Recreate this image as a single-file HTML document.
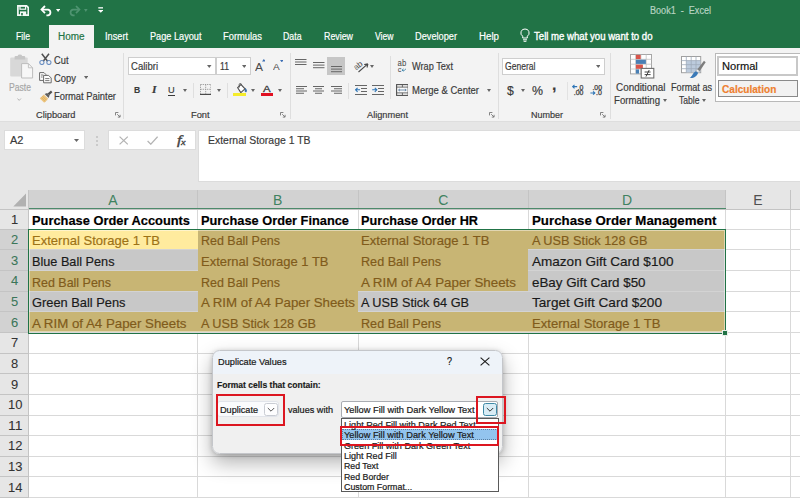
<!DOCTYPE html>
<html><head><meta charset="utf-8"><title>Book1 - Excel</title>
<style>
html,body{margin:0;padding:0;}
body{width:800px;height:498px;overflow:hidden;position:relative;background:#fff;font-family:"Liberation Sans",sans-serif;}
#app{position:absolute;left:0;top:0;width:800px;height:498px;overflow:hidden;}
#app div,#app svg,#app span{position:absolute;box-sizing:border-box;}
#app span{white-space:pre;transform-origin:0 50%;display:block;-webkit-text-stroke:0.18px currentColor;}
</style></head><body><div id="app">
<div style="left:0px;top:0px;width:800px;height:48px;background:#217346;"></div>
<div style="left:0px;top:48px;width:800px;height:73px;background:#f3f3f3;"></div>
<div style="left:0px;top:121px;width:800px;height:69px;background:#e6e6e6;"></div>
<div style="left:0px;top:121px;width:800px;height:1px;background:#dedede;"></div>
<span style="left:650px;top:3.50px;line-height:13px;font-size:10px;color:#b7d3c2;transform:scaleX(0.9069);">Book1  -  Excel</span>
<div style="left:48.5px;top:24.5px;width:45.5px;height:24px;background:#f3f3f3;"></div>
<span style="left:16px;top:30.00px;line-height:13px;font-size:10px;color:#fff;transform:scaleX(0.8682);">File</span>
<span style="left:58px;top:30.00px;line-height:13px;font-size:10px;color:#217346;transform:scaleX(0.9930);">Home</span>
<span style="left:105px;top:30.00px;line-height:13px;font-size:10px;color:#fff;transform:scaleX(0.9194);">Insert</span>
<span style="left:150px;top:30.00px;line-height:13px;font-size:10px;color:#fff;transform:scaleX(0.9168);">Page Layout</span>
<span style="left:222.5px;top:30.00px;line-height:13px;font-size:10px;color:#fff;transform:scaleX(0.9355);">Formulas</span>
<span style="left:283px;top:30.00px;line-height:13px;font-size:10px;color:#fff;transform:scaleX(0.8757);">Data</span>
<span style="left:323.5px;top:30.00px;line-height:13px;font-size:10px;color:#fff;transform:scaleX(0.8842);">Review</span>
<span style="left:375px;top:30.00px;line-height:13px;font-size:10px;color:#fff;transform:scaleX(0.8605);">View</span>
<span style="left:415px;top:30.00px;line-height:13px;font-size:10px;color:#fff;transform:scaleX(0.9212);">Developer</span>
<span style="left:478.5px;top:30.00px;line-height:13px;font-size:10px;color:#fff;transform:scaleX(0.9719);">Help</span>
<span style="left:534px;top:30.00px;line-height:13px;font-size:10px;color:#fff;transform:scaleX(0.9602);-webkit-text-stroke:0.35px #fff;">Tell me what you want to do</span>
<span style="left:54px;top:53.50px;line-height:13px;font-size:10px;color:#3a3a3a;transform:scaleX(0.9317);">Cut</span>
<span style="left:54px;top:71.50px;line-height:13px;font-size:10px;color:#3a3a3a;transform:scaleX(0.9418);">Copy</span>
<span style="left:54px;top:89.50px;line-height:13px;font-size:10px;color:#3a3a3a;transform:scaleX(0.9374);">Format Painter</span>
<span style="left:9px;top:80.50px;line-height:13px;font-size:10px;color:#a6a6a6;transform:scaleX(0.8601);">Paste</span>
<span style="left:36px;top:108.50px;line-height:12px;font-size:9.5px;color:#3a3a3a;transform:scaleX(0.9712);">Clipboard</span>
<span style="left:191px;top:108.50px;line-height:12px;font-size:9.5px;color:#3a3a3a;transform:scaleX(0.9781);">Font</span>
<span style="left:366.5px;top:108.50px;line-height:12px;font-size:9.5px;color:#3a3a3a;transform:scaleX(0.9704);">Alignment</span>
<span style="left:531px;top:108.50px;line-height:12px;font-size:9.5px;color:#3a3a3a;transform:scaleX(0.9468);">Number</span>
<div style="left:128px;top:57px;width:88px;height:18px;background:#fff;border:1px solid #cecece;"></div>
<div style="left:216px;top:57px;width:34.5px;height:18px;background:#fff;border:1px solid #cecece;"></div>
<span style="left:131px;top:59.50px;line-height:13px;font-size:10px;color:#3a3a3a;transform:scaleX(0.9526);">Calibri</span>
<span style="left:219.5px;top:59.50px;line-height:13px;font-size:10px;color:#3a3a3a;transform:scaleX(0.8662);">11</span>
<span style="left:133.5px;top:83.30px;line-height:13px;font-size:9.8px;color:#3a3a3a;font-weight:bold;transform:scaleX(0.8759);">B</span>
<span style="left:152px;top:83.30px;line-height:13px;font-size:10.2px;color:#3a3a3a;font-weight:bold;font-style:italic;font-family:'Liberation Serif',serif;transform:scaleX(1.1339);">I</span>
<span style="left:168.3px;top:83.30px;line-height:13px;font-size:9.8px;color:#3a3a3a;transform:scaleX(0.9466);">U</span>
<div style="left:168.3px;top:94.6px;width:6.7px;height:1px;background:#3a3a3a;"></div>
<span style="left:411.5px;top:59.50px;line-height:13px;font-size:10px;color:#3a3a3a;transform:scaleX(0.9181);">Wrap Text</span>
<span style="left:411.5px;top:83.50px;line-height:13px;font-size:10px;color:#3a3a3a;transform:scaleX(0.9491);">Merge &amp; Center</span>
<div style="left:501.5px;top:57.5px;width:103px;height:17px;background:#fff;border:1px solid #cecece;"></div>
<span style="left:505px;top:59.50px;line-height:13px;font-size:10px;color:#3a3a3a;transform:scaleX(0.8573);">General</span>
<span style="left:507.4px;top:81.60px;line-height:18px;font-size:13.5px;color:#3a3a3a;transform:scaleX(0.9048);">$</span>
<span style="left:532px;top:82.10px;line-height:17px;font-size:13px;color:#3a3a3a;transform:scaleX(0.9514);">%</span>
<span style="left:552px;top:73.80px;line-height:21px;font-size:16px;color:#3a3a3a;font-weight:bold;transform:scaleX(0.9881);">,</span>
<span style="left:616px;top:80.50px;line-height:13px;font-size:10px;color:#3a3a3a;transform:scaleX(0.9891);">Conditional</span>
<span style="left:614px;top:93.50px;line-height:13px;font-size:10px;color:#3a3a3a;transform:scaleX(0.9624);">Formatting</span>
<span style="left:671px;top:80.50px;line-height:13px;font-size:10px;color:#3a3a3a;transform:scaleX(0.9108);">Format as</span>
<span style="left:679px;top:93.50px;line-height:13px;font-size:10px;color:#3a3a3a;transform:scaleX(0.8575);">Table</span>
<div style="left:715px;top:53px;width:90px;height:48.6px;background:#fff;border:1px solid #b9b9b9;"></div>
<div style="left:717.4px;top:56.3px;width:81px;height:20px;background:#fff;border:2px solid #c8c8c8;"></div>
<div style="left:718px;top:80px;width:79.8px;height:16.8px;background:#f2f2f2;border:1px solid #8a8a8a;"></div>
<span style="left:721.7px;top:58.50px;line-height:15px;font-size:11.2px;color:#111;transform:scaleX(0.9927);">Normal</span>
<span style="left:721.7px;top:81.50px;line-height:14px;font-size:10.5px;color:#ee8030;font-weight:bold;transform:scaleX(0.9595);">Calculation</span>
<div style="left:123px;top:53px;width:1px;height:66px;background:#dedede;"></div>
<div style="left:289.5px;top:53px;width:1px;height:66px;background:#dedede;"></div>
<div style="left:497.5px;top:53px;width:1px;height:66px;background:#dedede;"></div>
<div style="left:609.5px;top:53px;width:1px;height:66px;background:#dedede;"></div>
<div style="left:390px;top:56px;width:1px;height:43px;background:#dedede;"></div>
<div style="left:4px;top:130.2px;width:81px;height:20px;background:#fff;border:1px solid #dcdcdc;"></div>
<span style="left:9.5px;top:133.00px;line-height:15px;font-size:11.5px;color:#3a3a3a;transform:scaleX(0.9589);">A2</span>
<div style="left:108.3px;top:130.2px;width:87.8px;height:20px;background:#fff;border:1px solid #dcdcdc;"></div>
<div style="left:198.3px;top:130.2px;width:610px;height:52px;background:#fff;border:1px solid #dcdcdc;"></div>
<span style="left:207.5px;top:133.00px;line-height:15px;font-size:11.5px;color:#3a3a3a;transform:scaleX(0.9076);">External Storage 1 TB</span>
<div style="left:0px;top:190px;width:800px;height:308px;background:#fff;"></div>
<div style="left:0px;top:190px;width:800px;height:19.3px;background:#e6e6e6;"></div>
<div style="left:28.5px;top:190px;width:697.2px;height:19.3px;background:#d2d2d2;"></div>
<div style="left:0px;top:209px;width:28.5px;height:289px;background:#e6e6e6;"></div>
<div style="left:0px;top:229.32999999999998px;width:28.5px;height:103.14999999999999px;background:#d2d2d2;"></div>
<div style="left:28.0px;top:209px;width:1px;height:289px;background:#d9d9d9;"></div>
<div style="left:197.0px;top:209px;width:1px;height:289px;background:#d9d9d9;"></div>
<div style="left:357.7px;top:209px;width:1px;height:289px;background:#d9d9d9;"></div>
<div style="left:527.5px;top:209px;width:1px;height:289px;background:#d9d9d9;"></div>
<div style="left:725.2px;top:209px;width:1px;height:289px;background:#d9d9d9;"></div>
<div style="left:790.1px;top:209px;width:1px;height:289px;background:#d9d9d9;"></div>
<div style="left:859.5px;top:209px;width:1px;height:289px;background:#d9d9d9;"></div>
<div style="left:28.5px;top:228.82999999999998px;width:772px;height:1px;background:#d9d9d9;"></div>
<div style="left:28.5px;top:249.45999999999998px;width:772px;height:1px;background:#d9d9d9;"></div>
<div style="left:28.5px;top:270.09px;width:772px;height:1px;background:#d9d9d9;"></div>
<div style="left:28.5px;top:290.71999999999997px;width:772px;height:1px;background:#d9d9d9;"></div>
<div style="left:28.5px;top:311.34999999999997px;width:772px;height:1px;background:#d9d9d9;"></div>
<div style="left:28.5px;top:331.98px;width:772px;height:1px;background:#d9d9d9;"></div>
<div style="left:28.5px;top:352.61px;width:772px;height:1px;background:#d9d9d9;"></div>
<div style="left:28.5px;top:373.24px;width:772px;height:1px;background:#d9d9d9;"></div>
<div style="left:28.5px;top:393.87px;width:772px;height:1px;background:#d9d9d9;"></div>
<div style="left:28.5px;top:414.5px;width:772px;height:1px;background:#d9d9d9;"></div>
<div style="left:28.5px;top:435.13px;width:772px;height:1px;background:#d9d9d9;"></div>
<div style="left:28.5px;top:455.76px;width:772px;height:1px;background:#d9d9d9;"></div>
<div style="left:28.5px;top:476.39px;width:772px;height:1px;background:#d9d9d9;"></div>
<div style="left:28.5px;top:497.02px;width:772px;height:1px;background:#d9d9d9;"></div>
<div style="left:197.0px;top:190px;width:1px;height:19.3px;background:#c4c4c4;"></div>
<div style="left:357.7px;top:190px;width:1px;height:19.3px;background:#c4c4c4;"></div>
<div style="left:527.5px;top:190px;width:1px;height:19.3px;background:#c4c4c4;"></div>
<div style="left:725.2px;top:190px;width:1px;height:19.3px;background:#c4c4c4;"></div>
<div style="left:790.1px;top:190px;width:1px;height:19.3px;background:#c4c4c4;"></div>
<div style="left:859.5px;top:190px;width:1px;height:19.3px;background:#c4c4c4;"></div>
<div style="left:0px;top:228.82999999999998px;width:28.5px;height:1px;background:#c4c4c4;"></div>
<div style="left:0px;top:249.45999999999998px;width:28.5px;height:1px;background:#c4c4c4;"></div>
<div style="left:0px;top:270.09px;width:28.5px;height:1px;background:#c4c4c4;"></div>
<div style="left:0px;top:290.71999999999997px;width:28.5px;height:1px;background:#c4c4c4;"></div>
<div style="left:0px;top:311.34999999999997px;width:28.5px;height:1px;background:#c4c4c4;"></div>
<div style="left:0px;top:331.98px;width:28.5px;height:1px;background:#c4c4c4;"></div>
<div style="left:0px;top:352.61px;width:28.5px;height:1px;background:#c4c4c4;"></div>
<div style="left:0px;top:373.24px;width:28.5px;height:1px;background:#c4c4c4;"></div>
<div style="left:0px;top:393.87px;width:28.5px;height:1px;background:#c4c4c4;"></div>
<div style="left:0px;top:414.5px;width:28.5px;height:1px;background:#c4c4c4;"></div>
<div style="left:0px;top:435.13px;width:28.5px;height:1px;background:#c4c4c4;"></div>
<div style="left:0px;top:455.76px;width:28.5px;height:1px;background:#c4c4c4;"></div>
<div style="left:0px;top:476.39px;width:28.5px;height:1px;background:#c4c4c4;"></div>
<div style="left:0px;top:497.02px;width:28.5px;height:1px;background:#c4c4c4;"></div>
<div style="left:28px;top:190px;width:1px;height:308px;background:#c4c4c4;"></div>
<div style="left:0px;top:208.5px;width:800px;height:1px;background:#c4c4c4;"></div>
<svg style="left:13px;top:193px;" width="14" height="14" viewBox="0 0 14 14"><path d="M13 0.5 L13 13.5 L0.3 13.5 Z" fill="#b1b1b1"/></svg>
<span style="left:108.2px;top:190.50px;line-height:18px;font-size:14px;color:#3f8260;-webkit-text-stroke:0;">A</span>
<span style="left:273.05px;top:190.50px;line-height:18px;font-size:14px;color:#3f8260;-webkit-text-stroke:0;">B</span>
<span style="left:438.3px;top:190.50px;line-height:18px;font-size:14px;color:#3f8260;-webkit-text-stroke:0;">C</span>
<span style="left:622.0500000000001px;top:190.50px;line-height:18px;font-size:14px;color:#3f8260;-webkit-text-stroke:0;">D</span>
<span style="left:753.3500000000001px;top:190.50px;line-height:18px;font-size:14px;color:#505050;-webkit-text-stroke:0;">E</span>
<span style="left:11.200000000000001px;top:210.51px;line-height:18px;font-size:13.5px;color:#333;transform:scaleX(0.9580);-webkit-text-stroke:0.08px;">1</span>
<span style="left:11.200000000000001px;top:231.14px;line-height:18px;font-size:13.5px;color:#3b7659;transform:scaleX(0.9580);-webkit-text-stroke:0.08px;">2</span>
<span style="left:11.200000000000001px;top:251.77px;line-height:18px;font-size:13.5px;color:#3b7659;transform:scaleX(0.9580);-webkit-text-stroke:0.08px;">3</span>
<span style="left:11.200000000000001px;top:272.40px;line-height:18px;font-size:13.5px;color:#3b7659;transform:scaleX(0.9580);-webkit-text-stroke:0.08px;">4</span>
<span style="left:11.200000000000001px;top:293.03px;line-height:18px;font-size:13.5px;color:#3b7659;transform:scaleX(0.9580);-webkit-text-stroke:0.08px;">5</span>
<span style="left:11.200000000000001px;top:313.66px;line-height:18px;font-size:13.5px;color:#3b7659;transform:scaleX(0.9580);-webkit-text-stroke:0.08px;">6</span>
<span style="left:11.200000000000001px;top:334.30px;line-height:18px;font-size:13.5px;color:#333;transform:scaleX(0.9580);-webkit-text-stroke:0.08px;">7</span>
<span style="left:11.200000000000001px;top:354.93px;line-height:18px;font-size:13.5px;color:#333;transform:scaleX(0.9580);-webkit-text-stroke:0.08px;">8</span>
<span style="left:11.200000000000001px;top:375.56px;line-height:18px;font-size:13.5px;color:#333;transform:scaleX(0.9580);-webkit-text-stroke:0.08px;">9</span>
<span style="left:7.6000000000000005px;top:396.19px;line-height:18px;font-size:13.5px;color:#333;transform:scaleX(0.9580);-webkit-text-stroke:0.08px;">10</span>
<span style="left:7.6000000000000005px;top:416.81px;line-height:18px;font-size:13.5px;color:#333;transform:scaleX(1.0274);-webkit-text-stroke:0.08px;">11</span>
<span style="left:7.6000000000000005px;top:437.44px;line-height:18px;font-size:13.5px;color:#333;transform:scaleX(0.9580);-webkit-text-stroke:0.08px;">12</span>
<span style="left:7.6000000000000005px;top:458.07px;line-height:18px;font-size:13.5px;color:#333;transform:scaleX(0.9580);-webkit-text-stroke:0.08px;">13</span>
<span style="left:7.6000000000000005px;top:478.70px;line-height:18px;font-size:13.5px;color:#333;transform:scaleX(0.9580);-webkit-text-stroke:0.08px;">14</span>
<div style="left:28.5px;top:229.32999999999998px;width:169.0px;height:20.63px;background:#ffeb9e;"></div>
<div style="left:197.5px;top:229.32999999999998px;width:160.7px;height:20.63px;background:#c8b574;"></div>
<div style="left:358.2px;top:229.32999999999998px;width:169.8px;height:20.63px;background:#c8b574;"></div>
<div style="left:528px;top:229.32999999999998px;width:197.70000000000005px;height:20.63px;background:#c8b574;"></div>
<div style="left:28.5px;top:249.95999999999998px;width:169.0px;height:20.63px;background:#c8c8c8;"></div>
<div style="left:197.5px;top:249.95999999999998px;width:160.7px;height:20.63px;background:#c8b574;"></div>
<div style="left:358.2px;top:249.95999999999998px;width:169.8px;height:20.63px;background:#c8b574;"></div>
<div style="left:528px;top:249.95999999999998px;width:197.70000000000005px;height:20.63px;background:#c8c8c8;"></div>
<div style="left:28.5px;top:270.59px;width:169.0px;height:20.63px;background:#c8b574;"></div>
<div style="left:197.5px;top:270.59px;width:160.7px;height:20.63px;background:#c8b574;"></div>
<div style="left:358.2px;top:270.59px;width:169.8px;height:20.63px;background:#c8b574;"></div>
<div style="left:528px;top:270.59px;width:197.70000000000005px;height:20.63px;background:#c8c8c8;"></div>
<div style="left:28.5px;top:291.21999999999997px;width:169.0px;height:20.63px;background:#c8c8c8;"></div>
<div style="left:197.5px;top:291.21999999999997px;width:160.7px;height:20.63px;background:#c8b574;"></div>
<div style="left:358.2px;top:291.21999999999997px;width:169.8px;height:20.63px;background:#c8c8c8;"></div>
<div style="left:528px;top:291.21999999999997px;width:197.70000000000005px;height:20.63px;background:#c8c8c8;"></div>
<div style="left:28.5px;top:311.84999999999997px;width:169.0px;height:20.63px;background:#c8b574;"></div>
<div style="left:197.5px;top:311.84999999999997px;width:160.7px;height:20.63px;background:#c8b574;"></div>
<div style="left:358.2px;top:311.84999999999997px;width:169.8px;height:20.63px;background:#c8b574;"></div>
<div style="left:528px;top:311.84999999999997px;width:197.70000000000005px;height:20.63px;background:#c8b574;"></div>
<div style="left:28.5px;top:249.45999999999998px;width:169.0px;height:1px;background:#d3d3d3;"></div>
<div style="left:28.5px;top:270.09px;width:169.0px;height:1px;background:#d3d3d3;"></div>
<div style="left:528px;top:249.45999999999998px;width:197.70000000000005px;height:1px;background:#d3d3d3;"></div>
<div style="left:528px;top:270.09px;width:197.70000000000005px;height:1px;background:#d3d3d3;"></div>
<div style="left:528px;top:270.09px;width:197.70000000000005px;height:1px;background:#d3d3d3;"></div>
<div style="left:528px;top:290.71999999999997px;width:197.70000000000005px;height:1px;background:#d3d3d3;"></div>
<div style="left:28.5px;top:290.71999999999997px;width:169.0px;height:1px;background:#d3d3d3;"></div>
<div style="left:28.5px;top:311.34999999999997px;width:169.0px;height:1px;background:#d3d3d3;"></div>
<div style="left:358.2px;top:290.71999999999997px;width:169.8px;height:1px;background:#d3d3d3;"></div>
<div style="left:358.2px;top:311.34999999999997px;width:169.8px;height:1px;background:#d3d3d3;"></div>
<div style="left:528px;top:290.71999999999997px;width:197.70000000000005px;height:1px;background:#d3d3d3;"></div>
<div style="left:528px;top:311.34999999999997px;width:197.70000000000005px;height:1px;background:#d3d3d3;"></div>
<span style="left:32px;top:211.51px;line-height:17px;font-size:13.3px;color:#000;font-weight:bold;transform:scaleX(0.9660);">Purchase Order Accounts</span>
<span style="left:201px;top:211.51px;line-height:17px;font-size:13.3px;color:#000;font-weight:bold;transform:scaleX(0.9628);">Purchase Order Finance</span>
<span style="left:361px;top:211.51px;line-height:17px;font-size:13.3px;color:#000;font-weight:bold;transform:scaleX(0.9538);">Purchase Order HR</span>
<span style="left:531.5px;top:211.51px;line-height:17px;font-size:13.3px;color:#000;font-weight:bold;transform:scaleX(0.9986);">Purchase Order Management</span>
<span style="left:32px;top:232.24px;line-height:17px;font-size:13.4px;color:#9d7216;transform:scaleX(0.9733);">External Storage 1 TB</span>
<span style="left:201px;top:232.24px;line-height:17px;font-size:13.4px;color:#805b1b;transform:scaleX(0.9310);">Red Ball Pens</span>
<span style="left:361px;top:232.24px;line-height:17px;font-size:13.4px;color:#805b1b;transform:scaleX(0.9771);">External Storage 1 TB</span>
<span style="left:531.5px;top:232.24px;line-height:17px;font-size:13.4px;color:#805b1b;transform:scaleX(0.9520);">A USB Stick 128 GB</span>
<span style="left:32px;top:252.88px;line-height:17px;font-size:13.4px;color:#1a1a1a;transform:scaleX(0.9473);">Blue Ball Pens</span>
<span style="left:201px;top:252.88px;line-height:17px;font-size:13.4px;color:#805b1b;transform:scaleX(0.9695);">External Storage 1 TB</span>
<span style="left:361px;top:252.88px;line-height:17px;font-size:13.4px;color:#805b1b;transform:scaleX(0.9427);">Red Ball Pens</span>
<span style="left:531.5px;top:252.88px;line-height:17px;font-size:13.4px;color:#1a1a1a;transform:scaleX(1.0112);">Amazon Gift Card $100</span>
<span style="left:32px;top:273.50px;line-height:17px;font-size:13.4px;color:#805b1b;transform:scaleX(0.9310);">Red Ball Pens</span>
<span style="left:201px;top:273.50px;line-height:17px;font-size:13.4px;color:#805b1b;transform:scaleX(0.9310);">Red Ball Pens</span>
<span style="left:361px;top:273.50px;line-height:17px;font-size:13.4px;color:#805b1b;transform:scaleX(0.9963);">A RIM of A4 Paper Sheets</span>
<span style="left:531.5px;top:273.50px;line-height:17px;font-size:13.4px;color:#1a1a1a;transform:scaleX(0.9966);">eBay Gift Card $50</span>
<span style="left:32px;top:294.13px;line-height:17px;font-size:13.4px;color:#1a1a1a;transform:scaleX(0.9588);">Green Ball Pens</span>
<span style="left:201px;top:294.13px;line-height:17px;font-size:13.4px;color:#805b1b;transform:scaleX(0.9899);">A RIM of A4 Paper Sheets</span>
<span style="left:361px;top:294.13px;line-height:17px;font-size:13.4px;color:#1a1a1a;transform:scaleX(0.9484);">A USB Stick 64 GB</span>
<span style="left:531.5px;top:294.13px;line-height:17px;font-size:13.4px;color:#1a1a1a;transform:scaleX(1.0154);">Target Gift Card $200</span>
<span style="left:32px;top:314.76px;line-height:17px;font-size:13.4px;color:#805b1b;transform:scaleX(0.9931);">A RIM of A4 Paper Sheets</span>
<span style="left:201px;top:314.76px;line-height:17px;font-size:13.4px;color:#805b1b;transform:scaleX(0.9478);">A USB Stick 128 GB</span>
<span style="left:361px;top:314.76px;line-height:17px;font-size:13.4px;color:#805b1b;transform:scaleX(0.9427);">Red Ball Pens</span>
<span style="left:531.5px;top:314.76px;line-height:17px;font-size:13.4px;color:#805b1b;transform:scaleX(0.9771);">External Storage 1 TB</span>
<div style="left:28.5px;top:207.8px;width:697.2px;height:1.4px;background:#4d8a6b;"></div>
<div style="left:28.9px;top:229.9px;width:696px;height:102.6px;border:1px solid rgba(255,255,255,0.45);"></div>
<div style="left:27.9px;top:228.8px;width:698px;height:104.8px;border:1.3px solid #217346;"></div>
<div style="left:722.2px;top:330.2px;width:5.4px;height:5.4px;background:#217346;border:0.6px solid #e8efe9;"></div>
<svg style="left:16.8px;top:5.4px;" width="12.2" height="11" viewBox="0 0 12.2 11"><path d="M0.9 0.9 H9.6 L11.3 2.6 V10.1 H0.9 Z" fill="none" stroke="#f4f9f6" stroke-width="1.7"/><rect x="3" y="0.9" width="5.6" height="3.3" fill="none" stroke="#f4f9f6" stroke-width="1.2"/><rect x="3" y="6.4" width="6.2" height="3.9" fill="#f4f9f6"/><rect x="4.2" y="8" width="1.6" height="2.4" fill="#217346"/></svg>
<svg style="left:39.5px;top:5px;" width="14" height="12" viewBox="0 0 14 12"><path d="M2 4.6 H8.2 A3 3 0 0 1 8.2 10.4 H6.4" fill="none" stroke="#fff" stroke-width="1.8"/><path d="M5 1 L1.5 4.6 L5 8.2" fill="none" stroke="#fff" stroke-width="1.8"/></svg>
<svg style="left:56.1px;top:8.8px;" width="4.2" height="3" viewBox="0 0 4.2 3"><path d="M0 0 L4.2 0 L2.1 3 Z" fill="#fff"/></svg>
<svg style="left:67px;top:5px;" width="14" height="12" viewBox="0 0 14 12"><path d="M12 4.6 H5.8 A3 3 0 0 0 5.8 10.4 H7.6" fill="none" stroke="#4f9471" stroke-width="1.7"/><path d="M9 1 L12.5 4.6 L9 8.2" fill="none" stroke="#4f9471" stroke-width="1.7"/></svg>
<svg style="left:84.2px;top:8.7px;" width="3.6" height="3" viewBox="0 0 3.6 3"><path d="M0 0 L3.6 0 L1.8 3 Z" fill="#4f9471"/></svg>
<svg style="left:97.8px;top:7.3px;" width="5.6" height="6" viewBox="0 0 5.6 6"><rect x="0.3" y="0.2" width="5" height="1.3" fill="#fff"/><path d="M0 3 H5.6 L2.8 5.8 Z" fill="#fff"/></svg>
<svg style="left:519.6px;top:28.4px;" width="10" height="14" viewBox="0 0 10 14"><path d="M5 1 A3.9 3.9 0 0 1 7.3 8.2 V10 H2.7 V8.2 A3.9 3.9 0 0 1 5 1 Z" fill="none" stroke="#fff" stroke-width="1"/><path d="M3 11.8 H7 M3.6 13.3 H6.4" stroke="#fff" stroke-width="1"/></svg>
<svg style="left:9px;top:54px;" width="25" height="25" viewBox="0 0 25 25"><rect x="1.2" y="3.4" width="17.5" height="19" rx="1" fill="#d8d8d8"/><path d="M5.6 5.4 V3 Q5.6 2 6.6 2 H8.6 Q9 0.6 10.9 0.6 Q12.8 0.6 13.2 2 H15.2 Q16.2 2 16.2 3 V5.4 Z" fill="#c6c6c6"/><path d="M12.6 9.6 H19.4 L23.6 13.8 V24 H12.6 Z" fill="#f7f7f7" stroke="#bdbdbd" stroke-width="1"/><path d="M19.4 9.6 V13.8 H23.6" fill="none" stroke="#bdbdbd" stroke-width="0.9"/></svg>
<svg style="left:17.3px;top:97.6px;" width="4.4" height="3" viewBox="0 0 4.4 3"><path d="M0.4 0.5 L2.2 2.4 L4 0.5" stroke="#b5b5b5" stroke-width="1" fill="none"/></svg>
<svg style="left:39px;top:52.8px;" width="13" height="12.5" viewBox="0 0 13 12.5"><path d="M2.8 0.8 L8.6 8.3 M10 0.8 L4.2 8.3" stroke="#505050" stroke-width="1.5" fill="none"/><ellipse cx="2.9" cy="9.5" rx="2.1" ry="2" fill="none" stroke="#6b8fc2" stroke-width="1.1"/><ellipse cx="9.9" cy="9.5" rx="2.1" ry="2" fill="none" stroke="#6b8fc2" stroke-width="1.1"/></svg>
<svg style="left:38.5px;top:72px;" width="13" height="12" viewBox="0 0 13 12"><path d="M0.6 0.6 H5 L6.8 2.4 V8.4 H0.6 Z" fill="#fdfdfd" stroke="#6a6a6a" stroke-width="1"/><path d="M2 3 H4.4 M2 5 H3.6" stroke="#6a6a6a" stroke-width="0.9"/><path d="M4.6 3.4 H9.6 L12.2 6 V10.8 H4.6 Z" fill="#fdfdfd" stroke="#6a6a6a" stroke-width="1"/><path d="M6.2 6.6 H10.4 M6.2 8.6 H10.4" stroke="#6a6a6a" stroke-width="0.9"/></svg>
<svg style="left:83.7px;top:76.1px;" width="4.2" height="3" viewBox="0 0 4.2 3"><path d="M0 0 L4.2 0 L2.1 3 Z" fill="#666"/></svg>
<svg style="left:39px;top:89.5px;" width="14" height="13.5" viewBox="0 0 14 13.5"><path d="M8.6 3.4 L12 0.6 L13.4 2.2 L10.2 5.2 Z" fill="#505050"/><path d="M5.6 4 L8.2 3 L10.6 5.6 L9.6 8 Z" fill="#5e5e5e"/><path d="M4.8 4.6 L9.2 8.8 L5.2 12.8 L0.8 8.6 Z" fill="#edc47e"/><path d="M3.4 6.2 L7.6 10.4 M2.2 7.4 L6.4 11.6" stroke="#d9a954" stroke-width="0.7" fill="none"/></svg>
<svg style="left:115px;top:112px;" width="6" height="6" viewBox="0 0 6 6"><path d="M0.5 3.4 V0.5 H3.4" stroke="#777" stroke-width="0.9" fill="none"/><path d="M2.2 2.2 L5 5 M5.1 2.8 V5.1 H2.8" stroke="#777" stroke-width="0.9" fill="none"/></svg>
<svg style="left:207.25px;top:64.5px;" width="4.5" height="3" viewBox="0 0 4.5 3"><path d="M0 0 L4.5 0 L2.25 3 Z" fill="#666"/></svg>
<svg style="left:241.75px;top:64.5px;" width="4.5" height="3" viewBox="0 0 4.5 3"><path d="M0 0 L4.5 0 L2.25 3 Z" fill="#666"/></svg>
<span style="left:255px;top:59.80px;line-height:14px;font-size:10.5px;color:#4a4a4a;transform:scaleX(1.1403);-webkit-text-stroke:0;">A</span>
<svg style="left:261.8px;top:59.3px;" width="3.6" height="2.4" viewBox="0 0 3.6 2.4"><path d="M0 2.4 L1.8 0 L3.6 2.4 Z" fill="#3c6eb4"/></svg>
<span style="left:273.3px;top:62.30px;line-height:11px;font-size:8.5px;color:#4a4a4a;transform:scaleX(1.1813);-webkit-text-stroke:0;">A</span>
<svg style="left:279.8px;top:59.5px;" width="3.6" height="2.4" viewBox="0 0 3.6 2.4"><path d="M0 0 L1.8 2.4 L3.6 0 Z" fill="#3c6eb4"/></svg>
<svg style="left:183.0px;top:89.0px;" width="4" height="3" viewBox="0 0 4 3"><path d="M0 0 L4 0 L2.0 3 Z" fill="#666"/></svg>
<div style="left:193px;top:83px;width:1px;height:15px;background:#dfdfdf;"></div>
<svg style="left:200px;top:84px;" width="11.4" height="11.4" viewBox="0 0 11.4 11.4"><path d="M0.5 0.5 H10.9 M0.5 0.5 V10 M10.9 0.5 V10 M5.7 0.5 V10 M0.5 5.3 H10.9" fill="none" stroke="#9a9a9a" stroke-width="1" stroke-dasharray="1.2 1"/><path d="M0 10.4 H11.4" stroke="#4a4a4a" stroke-width="1.2"/></svg>
<svg style="left:217.0px;top:89.0px;" width="4" height="3" viewBox="0 0 4 3"><path d="M0 0 L4 0 L2.0 3 Z" fill="#666"/></svg>
<div style="left:226.5px;top:83px;width:1px;height:15px;background:#dfdfdf;"></div>
<svg style="left:234px;top:82.6px;" width="14" height="11" viewBox="0 0 14 11"><path d="M3.6 4.6 L7 1.6 L11 5.8 L6.8 9.6 Z" fill="#fff" stroke="#4f4f4f" stroke-width="1.05"/><path d="M5.2 4.6 V1.6 Q5.2 0.5 6.3 0.5 Q7.4 0.5 7.4 1.8" fill="none" stroke="#4f4f4f" stroke-width="0.9"/><path d="M11.3 4.8 C12.9 6.6 13.4 8 12.5 8.9 C11.5 9.6 10.4 8.8 10.6 7.6 Z" fill="#3a6ea5"/></svg>
<div style="left:233.3px;top:93.2px;width:13px;height:3.2px;background:#f5ec2c;"></div>
<svg style="left:251.0px;top:89.0px;" width="4" height="3" viewBox="0 0 4 3"><path d="M0 0 L4 0 L2.0 3 Z" fill="#666"/></svg>
<span style="left:263.1px;top:83.40px;line-height:12px;font-size:9.6px;color:#3a3a3a;transform:scaleX(1.1863);-webkit-text-stroke:0.3px;">A</span>
<div style="left:260.6px;top:93.2px;width:12.5px;height:3.1px;background:#e11022;"></div>
<svg style="left:278.0px;top:89.0px;" width="4" height="3" viewBox="0 0 4 3"><path d="M0 0 L4 0 L2.0 3 Z" fill="#666"/></svg>
<svg style="left:280px;top:112px;" width="6" height="6" viewBox="0 0 6 6"><path d="M0.5 3.4 V0.5 H3.4" stroke="#777" stroke-width="0.9" fill="none"/><path d="M2.2 2.2 L5 5 M5.1 2.8 V5.1 H2.8" stroke="#777" stroke-width="0.9" fill="none"/></svg>
<div style="left:327px;top:57px;width:17.5px;height:18px;background:#c6c6c6;"></div>
<svg style="left:295.3px;top:58.8px;" width="11.5" height="7.5" viewBox="0 0 11.5 7.5"><rect x="0" y="0.0" width="11.5" height="1" fill="#666"/><rect x="0" y="2.5" width="11.5" height="1" fill="#666"/><rect x="0" y="5.0" width="11.5" height="1" fill="#666"/></svg>
<svg style="left:313px;top:62.3px;" width="11.5" height="7.800000000000001" viewBox="0 0 11.5 7.800000000000001"><rect x="0" y="0.0" width="11.5" height="1" fill="#666"/><rect x="0" y="2.6" width="11.5" height="1" fill="#666"/><rect x="0" y="5.2" width="11.5" height="1" fill="#666"/></svg>
<svg style="left:330.5px;top:66px;" width="11.5" height="7.800000000000001" viewBox="0 0 11.5 7.800000000000001"><rect x="0" y="0.0" width="11.5" height="1" fill="#666"/><rect x="0" y="2.6" width="11.5" height="1" fill="#666"/><rect x="0" y="5.2" width="11.5" height="1" fill="#666"/></svg>
<svg style="left:295.5px;top:86.2px;" width="11" height="9.0" viewBox="0 0 11 9.0"><rect x="0" y="0.0" width="11" height="1" fill="#666"/><rect x="0" y="2.25" width="8" height="1" fill="#666"/><rect x="0" y="4.5" width="11" height="1" fill="#666"/><rect x="0" y="6.75" width="8" height="1" fill="#666"/></svg>
<svg style="left:313px;top:86.2px;" width="11" height="9.0" viewBox="0 0 11 9.0"><rect x="0.0" y="0.0" width="11" height="1" fill="#666"/><rect x="2.0" y="2.25" width="7" height="1" fill="#666"/><rect x="0.0" y="4.5" width="11" height="1" fill="#666"/><rect x="2.0" y="6.75" width="7" height="1" fill="#666"/></svg>
<svg style="left:330.5px;top:86.2px;" width="11" height="9.0" viewBox="0 0 11 9.0"><rect x="0" y="0.0" width="11" height="1" fill="#666"/><rect x="3" y="2.25" width="8" height="1" fill="#666"/><rect x="0" y="4.5" width="11" height="1" fill="#666"/><rect x="3" y="6.75" width="8" height="1" fill="#666"/></svg>
<div style="left:348px;top:82.5px;width:1px;height:16px;background:#dfdfdf;"></div>
<svg style="left:353.5px;top:58.5px;" width="16" height="14" viewBox="0 0 16 14"><text x="1.2" y="9.2" font-family="Liberation Sans" font-size="8.2" fill="#4a4a4a" transform="rotate(-40 5 9)">ab</text><path d="M4.5 13 L13.5 5.2 M13.9 4.9 L10.2 5.5 M13.9 4.9 L13 8.5" stroke="#4a4a4a" stroke-width="1.1" fill="none"/></svg>
<svg style="left:370.0px;top:64.5px;" width="4" height="3" viewBox="0 0 4 3"><path d="M0 0 L4 0 L2.0 3 Z" fill="#666"/></svg>
<svg style="left:354.5px;top:85px;" width="12" height="10.5" viewBox="0 0 12 10.5"><rect x="0" y="0" width="12" height="1" fill="#666"/><rect x="6" y="3" width="6" height="1" fill="#666"/><rect x="6" y="6" width="6" height="1" fill="#666"/><rect x="0" y="9" width="12" height="1" fill="#666"/><path d="M5 4.8 H0.8 M2.6 2.8 L0.6 4.8 L2.6 6.8" stroke="#2e75b6" stroke-width="1.1" fill="none"/></svg>
<svg style="left:372px;top:85px;" width="12" height="10.5" viewBox="0 0 12 10.5"><rect x="0" y="0" width="12" height="1" fill="#666"/><rect x="6" y="3" width="6" height="1" fill="#666"/><rect x="6" y="6" width="6" height="1" fill="#666"/><rect x="0" y="9" width="12" height="1" fill="#666"/><path d="M0.2 4.8 H4.6 M2.8 2.8 L4.8 4.8 L2.8 6.8" stroke="#2e75b6" stroke-width="1.1" fill="none"/></svg>
<svg style="left:397px;top:58.5px;" width="12" height="14" viewBox="0 0 12 14"><text x="0.6" y="7.4" font-family="Liberation Sans" font-size="8.8" fill="#454545" textLength="8.6" lengthAdjust="spacingAndGlyphs">ab</text><text x="0.8" y="12.6" font-family="Liberation Sans" font-size="7.4" fill="#454545">c</text><path d="M5 11.2 Q7.6 12.2 9 9.8 M5 11.2 L6.5 9.9 M5 11.2 L6.6 12.3" stroke="#3f84a8" stroke-width="0.85" fill="none"/></svg>
<svg style="left:395.6px;top:84px;" width="12.8" height="12" viewBox="0 0 12.8 12"><rect x="0.6" y="0.6" width="11.6" height="10.8" fill="#fbfbfb" stroke="#4f4f4f" stroke-width="1.1"/><path d="M0.6 3.1 H12.2 M0.6 8.9 H12.2 M6.4 0.6 V3.1 M6.4 8.9 V11.4" stroke="#5a5a5a" stroke-width="0.9"/><path d="M2.6 6 H10.2 M3.9 4.9 L2.6 6 L3.9 7.1 M8.9 4.9 L10.2 6 L8.9 7.1" stroke="#5b7d9e" stroke-width="0.85" fill="none"/></svg>
<svg style="left:486.5px;top:89.0px;" width="4" height="3" viewBox="0 0 4 3"><path d="M0 0 L4 0 L2.0 3 Z" fill="#666"/></svg>
<svg style="left:488.5px;top:112px;" width="6" height="6" viewBox="0 0 6 6"><path d="M0.5 3.4 V0.5 H3.4" stroke="#777" stroke-width="0.9" fill="none"/><path d="M2.2 2.2 L5 5 M5.1 2.8 V5.1 H2.8" stroke="#777" stroke-width="0.9" fill="none"/></svg>
<svg style="left:595.75px;top:64.5px;" width="4.5" height="3" viewBox="0 0 4.5 3"><path d="M0 0 L4.5 0 L2.25 3 Z" fill="#666"/></svg>
<svg style="left:521.0px;top:89.0px;" width="4" height="3" viewBox="0 0 4 3"><path d="M0 0 L4 0 L2.0 3 Z" fill="#666"/></svg>
<div style="left:566.5px;top:82px;width:1px;height:18px;background:#e2e2e2;"></div>
<svg style="left:572.4px;top:84px;" width="13" height="12" viewBox="0 0 13 12"><path d="M5.2 2.6 H0.8 M2.5 0.9 L0.7 2.6 L2.5 4.3" stroke="#2e75b6" stroke-width="1.05" fill="none"/><text x="5.6" y="5.6" font-family="Liberation Sans" font-size="6.6" fill="#3c3c3c" stroke="#3c3c3c" stroke-width="0.25" textLength="5.8" lengthAdjust="spacingAndGlyphs">.0</text><text x="1.8" y="11.4" font-family="Liberation Sans" font-size="6.6" fill="#3c3c3c" stroke="#3c3c3c" stroke-width="0.25" textLength="9.6" lengthAdjust="spacingAndGlyphs">.00</text></svg>
<svg style="left:590px;top:84px;" width="13" height="12" viewBox="0 0 13 12"><text x="2.4" y="5.6" font-family="Liberation Sans" font-size="6.6" fill="#3c3c3c" stroke="#3c3c3c" stroke-width="0.25" textLength="9.6" lengthAdjust="spacingAndGlyphs">.00</text><path d="M0.4 9 H4.8 M3.1 7.3 L4.9 9 L3.1 10.7" stroke="#2e75b6" stroke-width="1.05" fill="none"/><text x="6" y="11.4" font-family="Liberation Sans" font-size="6.6" fill="#3c3c3c" stroke="#3c3c3c" stroke-width="0.25" textLength="5.8" lengthAdjust="spacingAndGlyphs">.0</text></svg>
<svg style="left:599.5px;top:112px;" width="6" height="6" viewBox="0 0 6 6"><path d="M0.5 3.4 V0.5 H3.4" stroke="#777" stroke-width="0.9" fill="none"/><path d="M2.2 2.2 L5 5 M5.1 2.8 V5.1 H2.8" stroke="#777" stroke-width="0.9" fill="none"/></svg>
<svg style="left:630px;top:54px;" width="25" height="25" viewBox="0 0 25 25"><rect x="0.5" y="0.5" width="21" height="19.4" fill="#fff" stroke="#a6a6a6" stroke-width="1"/><path d="M0.5 5.3 H21.5 M0.5 10.2 H21.5 M0.5 15 H21.5 M5.7 0.5 V19.9 M10.9 0.5 V19.9 M16.2 0.5 V19.9" stroke="#c2c2c2" stroke-width="0.8"/><rect x="5.9" y="0.9" width="4.8" height="4.2" fill="#d8554b"/><rect x="5.9" y="5.7" width="10" height="4.2" fill="#4a80b5"/><rect x="5.9" y="10.6" width="7" height="4.2" fill="#d8554b"/><rect x="5.9" y="15.4" width="3.2" height="4.2" fill="#4a80b5"/><rect x="11.2" y="14.4" width="12.6" height="9.6" fill="#fff" stroke="#6e6e6e" stroke-width="1.1"/><path d="M14.6 18 H20.6 M14.6 20.6 H20.6 M19.2 16 L16 22.6" stroke="#333" stroke-width="0.9"/></svg>
<svg style="left:662.5px;top:99.0px;" width="4" height="3" viewBox="0 0 4 3"><path d="M0 0 L4 0 L2.0 3 Z" fill="#666"/></svg>
<svg style="left:681px;top:55.5px;" width="25" height="24" viewBox="0 0 25 24"><rect x="0.5" y="0.5" width="19.2" height="16.2" fill="#fff" stroke="#a0a0a0" stroke-width="1"/><rect x="5.3" y="4.6" width="14" height="11.8" fill="#bccbdd"/><path d="M0.5 4.6 H19.7 M0.5 8.7 H19.7 M0.5 12.7 H19.7 M5.3 0.5 V16.7 M10.2 0.5 V16.7 M15 0.5 V16.7" stroke="#9eabba" stroke-width="0.8"/><path d="M23 4.8 L24.7 6.3 L18.6 15.2 L16.2 13.6 Z" fill="#7d7d7d"/><path d="M16.2 13.4 L18.4 15 L17.2 16.6 L15 15 Z" fill="#f4f4f4" stroke="#b0b0b0" stroke-width="0.5"/><path d="M14.9 15.2 L17.1 16.8 C16.4 20.2 12.4 22.6 8.6 22 C11.2 20.6 11.6 16.6 14.9 15.2 Z" fill="#3b7ab8"/></svg>
<svg style="left:702.0px;top:99.0px;" width="4" height="3" viewBox="0 0 4 3"><path d="M0 0 L4 0 L2.0 3 Z" fill="#666"/></svg>
<svg style="left:73.5px;top:139.0px;" width="5" height="3" viewBox="0 0 5 3"><path d="M0 0 L5 0 L2.5 3 Z" fill="#666"/></svg>
<svg style="left:95.5px;top:135.5px;" width="2" height="10" viewBox="0 0 2 10"><circle cx="1" cy="1" r="0.7" fill="#9a9a9a"/><circle cx="1" cy="5" r="0.7" fill="#9a9a9a"/><circle cx="1" cy="9" r="0.7" fill="#9a9a9a"/></svg>
<svg style="left:118.5px;top:136px;" width="9.4" height="9" viewBox="0 0 9.4 9"><path d="M0.6 0.6 L8.8 8.4 M8.8 0.6 L0.6 8.4" stroke="#b4b4b4" stroke-width="1.25" fill="none"/></svg>
<svg style="left:147px;top:136px;" width="11.2" height="9" viewBox="0 0 11.2 9"><path d="M0.6 5 L3.8 8.2 L10.6 0.7" stroke="#b4b4b4" stroke-width="1.25" fill="none"/></svg>
<span style="left:176.6px;top:132.00px;line-height:16px;font-size:12px;color:#444;font-style:italic;font-family:'Liberation Serif',serif;transform:scaleX(1.3757);-webkit-text-stroke:0.35px #444;">f</span>
<span style="left:181px;top:136.80px;line-height:11px;font-size:8.5px;color:#444;font-style:italic;font-family:'Liberation Serif',serif;transform:scaleX(1.2165);-webkit-text-stroke:0.35px #444;">x</span>
<div style="left:211.5px;top:349.5px;width:291.5px;height:104.6px;background:#f0f0f0;border:1px solid #c4c6ca;border-radius:7.5px;box-shadow:0 9px 20px rgba(0,0,0,0.30),0 1px 5px rgba(0,0,0,0.20);background:linear-gradient(#eef3f9 0,#eef3f9 23px,#f0f0f0 23.5px);"></div>
<span style="left:218px;top:355.30px;line-height:13px;font-size:9.7px;color:#1a1a1a;transform:scaleX(0.9516);-webkit-text-stroke:0.22px #1a1a1a;">Duplicate Values</span>
<span style="left:446.5px;top:354.30px;line-height:14px;font-size:10.5px;color:#1a1a1a;transform:scaleX(0.8556);-webkit-text-stroke:0.22px #1a1a1a;">?</span>
<svg style="left:480px;top:356.7px;" width="10" height="9" viewBox="0 0 10 9"><path d="M0.6 0.6 L9.4 8.4 M9.4 0.6 L0.6 8.4" stroke="#1f1f1f" stroke-width="1.15" fill="none"/></svg>
<span style="left:217.3px;top:379.00px;line-height:12px;font-size:9.5px;color:#1a1a1a;font-weight:bold;transform:scaleX(0.8970);">Format cells that contain:</span>
<div style="left:217px;top:400.8px;width:62px;height:16.6px;background:#fafbfd;border:1px solid #e1e4ea;border-radius:3px;"></div>
<span style="left:219.6px;top:403.30px;line-height:13px;font-size:9.7px;color:#1a1a1a;transform:scaleX(0.9408);-webkit-text-stroke:0.22px #1a1a1a;">Duplicate</span>
<div style="left:264.3px;top:403px;width:14px;height:13px;background:#fdfdfe;border:1px solid #c9ccd3;border-radius:2.5px;"></div>
<svg style="left:267.3px;top:407.2px;" width="8" height="6" viewBox="0 0 8 6"><path d="M0.8 1 L4 4.2 L7.2 1" stroke="#555" stroke-width="1" fill="none"/></svg>
<span style="left:288px;top:403.30px;line-height:13px;font-size:9.7px;color:#1a1a1a;transform:scaleX(0.9387);-webkit-text-stroke:0.22px #1a1a1a;">values with</span>
<div style="left:340.7px;top:401px;width:157px;height:16.5px;background:#fff;border:1px solid #a9acb2;border-radius:2px;"></div>
<span style="left:344px;top:403.30px;line-height:13px;font-size:9.7px;color:#1a1a1a;transform:scaleX(0.9579);-webkit-text-stroke:0.22px #1a1a1a;">Yellow Fill with Dark Yellow Text</span>
<div style="left:483.1px;top:402.5px;width:13.6px;height:13.3px;background:#d9ecf5;border:1px solid #3f89a6;border-radius:2.5px;"></div>
<svg style="left:486px;top:406.8px;" width="8" height="6" viewBox="0 0 8 6"><path d="M0.8 1 L4 4.2 L7.2 1" stroke="#333" stroke-width="1" fill="none"/></svg>
<div style="left:340.7px;top:418px;width:158px;height:74px;background:#fff;border:1px solid #5a5a5a;"></div>
<div style="left:342px;top:429.2px;width:155.5px;height:11.2px;background:#93c4ee;border:1px dotted #5b7fa0;"></div>
<span style="left:343.8px;top:417.80px;line-height:13px;font-size:9.7px;color:#1a1a1a;transform:scaleX(0.9383);-webkit-text-stroke:0.22px #1a1a1a;">Light Red Fill with Dark Red Text</span>
<span style="left:343.8px;top:428.20px;line-height:13px;font-size:9.7px;color:#1a1a1a;transform:scaleX(0.9535);-webkit-text-stroke:0.22px #1a1a1a;">Yellow Fill with Dark Yellow Text</span>
<span style="left:343.8px;top:438.60px;line-height:13px;font-size:9.7px;color:#1a1a1a;transform:scaleX(0.9351);-webkit-text-stroke:0.22px #1a1a1a;">Green Fill with Dark Green Text</span>
<span style="left:343.8px;top:449.00px;line-height:13px;font-size:9.7px;color:#1a1a1a;transform:scaleX(0.9320);-webkit-text-stroke:0.22px #1a1a1a;">Light Red Fill</span>
<span style="left:343.8px;top:459.40px;line-height:13px;font-size:9.7px;color:#1a1a1a;transform:scaleX(0.9038);-webkit-text-stroke:0.22px #1a1a1a;">Red Text</span>
<span style="left:343.8px;top:469.80px;line-height:13px;font-size:9.7px;color:#1a1a1a;transform:scaleX(0.9062);-webkit-text-stroke:0.22px #1a1a1a;">Red Border</span>
<span style="left:343.8px;top:480.20px;line-height:13px;font-size:9.7px;color:#1a1a1a;transform:scaleX(0.9114);-webkit-text-stroke:0.22px #1a1a1a;">Custom Format...</span>
<div style="left:216.1px;top:393.8px;width:68.9px;height:31.9px;border:2.6px solid #dc1620;"></div>
<div style="left:475.9px;top:396.1px;width:29.8px;height:28.1px;border:2.5px solid #dc1620;"></div>
<div style="left:339.5px;top:425.6px;width:159.5px;height:20.7px;border:2.4px solid #dc1620;"></div>
</div></body></html>
